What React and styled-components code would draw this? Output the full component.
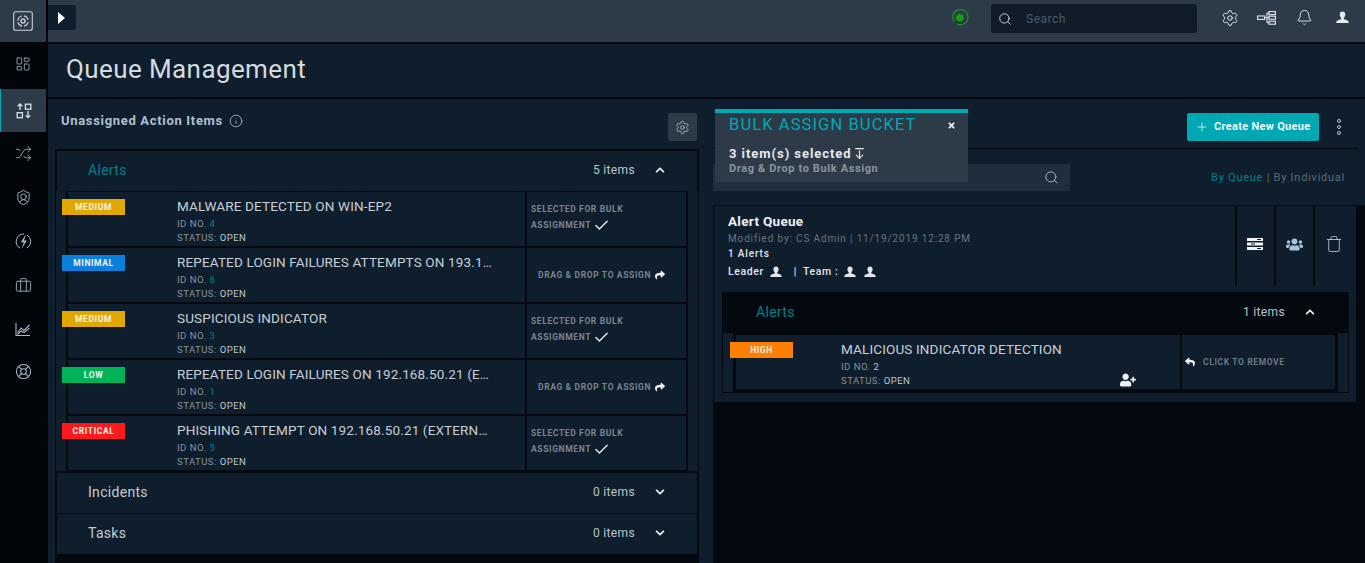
import React from 'react';
import styled, { createGlobalStyle } from 'styled-components';
import {
  LayoutDashboard, Shuffle, ShieldUser, Briefcase, LifeBuoy, Settings, Bell, Search,
  Plus, Check, Info, Trash, ArrowDownFromLine
} from 'lucide-react';
import { FaShare, FaReply, FaUsers, FaUserPlus, FaChevronUp, FaChevronDown, FaTimes } from 'react-icons/fa';

const GlobalStyle = createGlobalStyle`
  html, body { margin: 0; height: 100%; overflow: hidden; background: #03090f; }
  body { font-family: Roboto, "Liberation Sans", sans-serif; }
  * { box-sizing: border-box; }
`;

const Shell = styled.div`
  display: flex;
  width: 1365px;
  height: 563px;
  overflow: hidden;
  background: #03090f;
`;

const Sidebar = styled.nav`
  width: 48px;
  flex: none;
  background: #02060b;
  display: flex;
  flex-direction: column;
`;

const LogoCell = styled.div`
  width: 46px;
  height: 42px;
  background: #2d3a48;
  display: flex;
  align-items: center;
  justify-content: center;
  color: #c9d0d6;
`;

const NavItem = styled.div`
  width: 46px;
  height: ${p => p.$h || 43}px;
  margin-top: ${p => p.$gap}px;
  display: flex;
  align-items: center;
  justify-content: center;
  color: #a5b8c9;
  background: ${p => (p.$active ? '#2d3a48' : 'transparent')};
  border-left: ${p => (p.$active ? '1px solid #00a8b3' : '0')};
`;

const Main = styled.div`
  flex: 1;
  min-width: 0;
  display: flex;
  flex-direction: column;
`;

const TopBar = styled.header`
  height: 42px;
  flex: none;
  background: #2d3a48;
  display: flex;
  align-items: flex-start;
  color: #e6ebef;
`;

const ExpandButton = styled.div`
  width: 28px;
  height: 25px;
  margin-top: 5px;
  background: #0f1e2d;
  border-radius: 0 2px 2px 0;
  display: flex;
  align-items: center;
  padding-left: 10px;
  &::before {
    content: '';
    border-left: 7px solid #fff;
    border-top: 6px solid transparent;
    border-bottom: 6px solid transparent;
  }
`;

const Status = styled.div`
  margin-left: auto;
  margin-top: 8px;
  width: 18px;
  height: 18px;
`;

const TopSearch = styled.div`
  width: 206px;
  height: 29px;
  margin: 4px 23px 0 22px;
  background: #101d28;
  border-radius: 2px;
  display: flex;
  align-items: center;
  padding-left: 7px;
  gap: 14px;
  font-size: 12px;
  letter-spacing: 0.5px;
  color: #4d5b68;
`;

const TopIcons = styled.div`
  display: flex;
  align-items: center;
  height: 35px;
  padding-right: 13px;
`;

const TopIcon = styled.div`
  width: 20px;
  margin-left: ${p => p.$gap || 0}px;
  display: flex;
  justify-content: center;
`;

const PageHeader = styled.div`
  height: 53px;
  flex: none;
  margin: 2px 0;
  background: #0f1e2d;
  padding: 8px 18px;
  font-size: 26px;
  line-height: 34px;
  letter-spacing: 0.4px;
  color: #d5dade;
`;

const Content = styled.div`
  flex: 1;
  min-height: 0;
  display: flex;
`;

const LeftPanel = styled.section`
  width: 665px;
  flex: none;
  background: #0f1e2d;
  display: flex;
  flex-direction: column;
`;

const LeftHead = styled.div`
  height: 50px;
  flex: none;
  padding: 14px 16px 0 13px;
  display: flex;
  align-items: flex-start;
  color: #aec0d1;
  font-size: 13px;
  font-weight: 700;
  letter-spacing: 0.68px;
`;

const LeftTitle = styled.div`
  line-height: 15px;
  display: flex;
  align-items: center;
  gap: 6px;
`;

const GearButton = styled.div`
  width: 29px;
  height: 28px;
  margin-left: auto;
  background: #2d3a48;
  border-radius: 2px;
  display: flex;
  align-items: center;
  justify-content: center;
`;

const Board = styled.div`
  margin: 0 14px 0 7px;
  padding: 2px 1px 0;
  flex: 1;
  background: #03090f;
  display: flex;
  flex-direction: column;
`;

const GroupHead = styled.div`
  height: ${p => p.$h || 40}px;
  flex: none;
  margin: ${p => p.$m || '0 1px 1px'};
  background: ${p => (p.$dark ? '#03090f' : '#0f1e2d')};
  display: flex;
  align-items: center;
  padding-left: ${p => p.$pad || 31}px;
  padding-right: ${p => p.$pr || 32}px;
  padding-bottom: 3px;
  color: ${p => (p.$open ? '#00808c' : '#c4cbd2')};
  font-size: 14px;
  letter-spacing: 0.3px;
`;

const GroupCount = styled.span`
  margin-left: auto;
  margin-right: 20px;
  font-size: 12px;
  letter-spacing: 0.35px;
  color: #bcc4cb;
`;

const Rows = styled.div`
  display: flex;
  gap: 2px;
  align-items: stretch;
  margin-bottom: 2px;
`;

const Rail = styled.div`
  width: 10px;
  flex: none;
  background: #0f1e2d;
`;

const RowStack = styled.div`
  flex: 1;
  min-width: 0;
  display: flex;
  flex-direction: column;
  gap: 2px;
  padding: 1px 0;
`;

const Row = styled.article`
  position: relative;
  height: 54px;
  background: #0f1e2d;
  display: flex;
  padding-left: ${p => p.$pad || 109}px;
`;

const Badge = styled.span`
  position: absolute;
  left: -6px;
  top: 7px;
  width: 63px;
  height: 16px;
  background: ${p => p.$color};
  color: #f5f5f0;
  font-size: 8.5px;
  font-weight: 700;
  letter-spacing: 0.6px;
  display: flex;
  align-items: center;
  justify-content: center;
`;

const RowBody = styled.div`
  flex: 1;
  min-width: 0;
  padding-top: 6px;
  padding-right: 29px;
`;

const RowTitle = styled.div`
  font-size: 13.5px;
  line-height: 17px;
  letter-spacing: 0.15px;
  color: #c8ced4;
  text-transform: uppercase;
  white-space: nowrap;
  overflow: hidden;
  text-overflow: ellipsis;
`;

const RowMeta = styled.div`
  margin-top: ${p => (p.$first ? '2px' : '0')};
  font-size: 9.5px;
  line-height: 14px;
  letter-spacing: 0.5px;
  color: #84929f;
`;

const MetaValue = styled.span`
  color: ${p => (p.$teal ? '#00808c' : '#c0c8d0')};
`;

const RowAction = styled.div`
  width: ${p => p.$w || 161}px;
  flex: none;
  border-left: 2px solid #03090f;
  display: flex;
  flex-direction: column;
  justify-content: center;
  padding-left: ${p => p.$pad || 4}px;
  padding-bottom: ${p => (p.$stacked ? 3 : 0)}px;
  color: ${p => p.$color || '#7a858f'};
  font-size: 8.5px;
  font-weight: 700;
  letter-spacing: 0.62px;
  line-height: 15px;
`;

const ActionLine = styled.div`
  display: flex;
  align-items: center;
  gap: ${p => p.$gap || 2}px;
  white-space: nowrap;
`;

const AddMember = styled.span`
  position: absolute;
  left: 384px;
  bottom: 1px;
  display: flex;
  color: #eef1f3;
`;

const RightPanel = styled.section`
  flex: 1;
  min-width: 0;
  display: flex;
  flex-direction: column;
  position: relative;
`;

const RightTop = styled.div`
  height: 106px;
  flex: none;
  background: #0f1e2d;
`;

const ToolRow = styled.div`
  height: 50px;
  margin-right: 7px;
  border-bottom: 1px solid #03090f;
  display: flex;
  align-items: flex-start;
  justify-content: flex-end;
  padding-top: 14px;
`;

const CreateButton = styled.div`
  width: 132px;
  height: 28px;
  background: #00a8b3;
  border-radius: 2px;
  color: #eefafa;
  font-size: 11px;
  font-weight: 700;
  letter-spacing: 0.3px;
  display: flex;
  align-items: center;
  gap: 5px;
  padding: 0 0 1px 8px;
`;

const MoreDots = styled.div`
  width: 39px;
  height: 28px;
  display: flex;
  flex-direction: column;
  align-items: center;
  justify-content: center;
  gap: 2px;
  & > i {
    width: 4px;
    height: 4px;
    border-radius: 50%;
    border: 1px solid #b4c2cf;
  }
`;

const FilterRow = styled.div`
  display: flex;
  align-items: flex-start;
  justify-content: space-between;
  padding: 15px 20px 0 0;
`;

const QueueSearch = styled.div`
  width: 357px;
  height: 27px;
  background: #1f2e3d;
  display: flex;
  align-items: center;
  justify-content: flex-end;
  padding-right: 11px;
  color: #b8c4cf;
`;

const ViewToggle = styled.div`
  margin-top: 7px;
  font-size: 11px;
  letter-spacing: 0.75px;
  color: #5d6975;
`;

const ToggleOn = styled.span`
  color: #00808c;
`;

const QueueCard = styled.article`
  width: 642px;
  height: 197px;
  margin-left: 1px;
  background: #0f1e2d;
  border-top: 1px solid #03090f;
  flex: none;
`;

const CardTop = styled.div`
  height: 80px;
  display: flex;
`;

const CardInfo = styled.div`
  flex: 1;
  padding: 5px 0 0 14px;
`;

const CardName = styled.div`
  font-size: 13.5px;
  font-weight: 700;
  line-height: 20px;
  letter-spacing: 0.3px;
  color: #eef1f3;
`;

const CardLine = styled.div`
  font-size: 10px;
  line-height: 15px;
  letter-spacing: 0.85px;
  color: ${p => p.$color || '#e2e6ea'};
  font-weight: ${p => (p.$bold ? 500 : 400)};
`;

const CardPeople = styled.div`
  height: 21px;
  display: flex;
  align-items: center;
  gap: 6px;
  font-size: 10.5px;
  font-weight: 500;
  letter-spacing: 0.6px;
  color: #e2e6ea;
`;

const PeopleRule = styled.span`
  margin-left: 6px;
`;

const PeopleIcon = styled.span`
  display: flex;
  margin-left: ${p => p.$gap || 0}px;
`;

const CardTool = styled.div`
  width: 39px;
  border-left: 2px solid #03090f;
  display: flex;
  align-items: center;
  justify-content: center;
  padding: 0 1px 4px 0;
  color: ${p => p.$color || '#e8ecef'};
  &:last-child { width: 43px; padding-right: 3px; }
`;

const Inner = styled.div`
  margin: 6px 7px 0 8px;
  height: 101px;
  background: #03090f;
`;

const InnerRows = styled(Rows)`
  height: 59px;
  margin: -1px 1px 0;
  gap: 3px;
`;

const InnerStack = styled(RowStack)`
  padding-top: 2px;
`;

const Bucket = styled.aside`
  position: absolute;
  left: 2px;
  top: 10px;
  width: 253px;
  height: 73px;
  background: #2d3a48;
  border-top: 4px solid #00a8b3;
  padding: 2px 12px 0 14px;
`;

const BucketHead = styled.div`
  display: flex;
  justify-content: space-between;
  align-items: center;
  font-size: 16.5px;
  line-height: 20px;
  letter-spacing: 1.1px;
  color: #00a8b3;
`;

const BucketCount = styled.div`
  margin-top: 11px;
  display: flex;
  align-items: center;
  gap: 1px;
  font-size: 13px;
  font-weight: 700;
  line-height: 15px;
  letter-spacing: 0.95px;
  color: #e6e9ec;
`;

const BucketHint = styled.div`
  margin-top: 1px;
  font-size: 11px;
  font-weight: 700;
  line-height: 14px;
  letter-spacing: 0.62px;
  color: #8a949e;
`;

const UserGlyph = ({ size = 12 }) => (
  <svg width={size} height={size} viewBox="0 0 12 12" fill="currentColor">
    <path d="M6 .5c1.6 0 2.6 1.2 2.6 2.8 0 1.2-.6 2.4-1.3 3v1c.5.5 3.2 1 4 1.9.3.3.4 1 .4 1.8H.3c0-.8.1-1.5.4-1.8.8-.9 3.5-1.4 4-1.9v-1c-.7-.6-1.3-1.8-1.3-3C3.4 1.7 4.4.5 6 .5z" />
  </svg>
);

const LogoMark = () => (
  <svg width="20" height="20" viewBox="0 0 20 20" fill="none" stroke="currentColor">
    <rect x="0.7" y="0.7" width="18.6" height="18.6" rx="2" strokeWidth="1.1" />
    <path d="M4.8 10a5.2 5.2 0 0 1 4-5M11 4.9a5.2 5.2 0 0 1 4.1 4M15.1 11a5.2 5.2 0 0 1-4 4.1M9 15.1a5.2 5.2 0 0 1-4.1-4" strokeWidth="1.1" />
    <circle cx="10" cy="10" r="2" strokeWidth="1.4" />
  </svg>
);

const TransferGlyph = () => (
  <svg width="16" height="16" viewBox="0 0 16 16" fill="none" stroke="#dbe3ea" strokeWidth="1.3">
    <path d="M4 7V1M1.7 3.2 4 1l2.3 2.2" />
    <rect x="1.2" y="9.7" width="5.2" height="5" />
    <rect x="9.4" y="1.2" width="5.4" height="5" />
    <path d="M12 8v6.5M9.8 12.4l2.2 2.2 2.2-2.2" />
  </svg>
);

const BoltGlyph = () => (
  <svg width="17" height="17" viewBox="0 0 17 17" fill="none" stroke="#a5b8c9">
    <path d="M5 15A7.5 7.5 0 0 1 9 1M12 2a7.5 7.5 0 0 1 0 13" strokeWidth="1" />
    <path d="M11 1 5.8 9.3h3L6.5 16l5.4-8.6H9z" fill="#a5b8c9" stroke="none" />
  </svg>
);

const ChartGlyph = () => (
  <svg width="16" height="16" viewBox="0 0 16 16" fill="none" stroke="#a5b8c9" strokeWidth="1.1">
    <path d="M1 2v12.5h14" />
    <path d="M2.5 11.5 6 7l3 2.5L14.5 4M2.5 13.5 6 10l3 1.6 5.5-4.6" />
  </svg>
);

const FlowGlyph = () => (
  <svg width="19" height="14" viewBox="0 0 19 14" fill="none" stroke="#e6ebef" strokeWidth="1.1">
    <rect x="0.6" y="5" width="7" height="3.4" />
    <rect x="12" y="0.6" width="6.4" height="3" />
    <rect x="12" y="5.2" width="6.4" height="3" />
    <rect x="12" y="10.2" width="6.4" height="3" />
    <path d="M7.6 6.7H12M10 2.1v9.6M10 2.1h2M10 11.7h2" />
  </svg>
);

const StatusGlyph = () => (
  <svg width="18" height="18" viewBox="0 0 18 18" fill="none">
    <path d="M3.2 13.6A7.6 7.6 0 1 1 6 16" stroke="#15a012" strokeWidth="1.1" />
    <path d="M4.6 10C5 7.4 7.4 5.6 9.6 5.8l.8 1.5 2.3-1.4-.6 2.6 1 1.3c-.4 2.2-2.2 3.7-4.2 3.7-2 0-3.6-1.5-4.3-3.5z" fill="#15a012" />
  </svg>
);

const StackGlyph = () => (
  <svg width="16" height="12" viewBox="0 0 16 12" fill="#f0f3f5">
    <path d="M0 0h16v3H0zM0 4.5h16v3H0zM0 9h16v3H0z" />
    <path d="M10 1h4v1h-4zM4 5.5h4v1H4zM10 10h4v1h-4z" fill="#0f1e2d" />
  </svg>
);

const items = [
  { sev: 'Medium', color: '#e0a800', title: 'Malware detected on WIN-EP2', id: 4, picked: true },
  { sev: 'Minimal', color: '#0a7fdc', title: 'Repeated Login Failures Attempts on 193.168.50.21 (External)', id: 6 },
  { sev: 'Medium', color: '#e0a800', title: 'Suspicious Indicator', id: 3, picked: true },
  { sev: 'Low', color: '#00b359', title: 'Repeated Login Failures on 192.168.50.21 (External)', id: 1 },
  { sev: 'Critical', color: '#ff1a1a', title: 'Phishing Attempt on 192.168.50.21 (External Source)', id: 5, picked: true }
];

const PickedAction = () => (
  <RowAction $stacked>
    <ActionLine>SELECTED FOR BULK</ActionLine>
    <ActionLine>ASSIGNMENT <Check size={17} color="#eef1f3" strokeWidth={1.8} /></ActionLine>
  </RowAction>
);

const DragAction = () => (
  <RowAction $pad={11}>
    <ActionLine $gap={4}>DRAG &amp; DROP TO ASSIGN <FaShare size={10} color="#eef1f3" /></ActionLine>
  </RowAction>
);

const navIcons = [
  <LayoutDashboard size={16} strokeWidth={1.2} />,
  <TransferGlyph />,
  <Shuffle size={17} strokeWidth={1.2} />,
  <ShieldUser size={17} strokeWidth={1.3} />,
  <BoltGlyph />,
  <Briefcase size={17} strokeWidth={1.2} />,
  <ChartGlyph />,
  <LifeBuoy size={17} strokeWidth={1.5} />
];

const navGaps = [0, 4, 0, 1, 1, 1, 0, 0];

export default function App() {
  return (
    <Shell>
      <GlobalStyle />
      <Sidebar>
        <LogoCell><LogoMark /></LogoCell>
        {navIcons.map((icon, i) => (
          <NavItem key={i} $gap={navGaps[i]} $active={i === 1}>{icon}</NavItem>
        ))}
      </Sidebar>
      <Main>
        <TopBar>
          <ExpandButton />
          <Status><StatusGlyph /></Status>
          <TopSearch><Search size={14} color="#dfe5ea" strokeWidth={1.5} />Search</TopSearch>
          <TopIcons>
            <TopIcon><Settings size={18} strokeWidth={1.3} /></TopIcon>
            <TopIcon $gap={16}><FlowGlyph /></TopIcon>
            <TopIcon $gap={18}><Bell size={17} strokeWidth={1.3} /></TopIcon>
            <TopIcon $gap={18}><UserGlyph size={13} /></TopIcon>
          </TopIcons>
        </TopBar>
        <PageHeader>Queue Management</PageHeader>
        <Content>
          <LeftPanel>
            <LeftHead>
              <LeftTitle>Unassigned Action Items <Info size={14} strokeWidth={1.4} /></LeftTitle>
              <GearButton><Settings size={15} strokeWidth={1.3} color="#b4c2cf" /></GearButton>
            </LeftHead>
            <Board>
              <GroupHead $open $m="0 1px">
                Alerts
                <GroupCount>5 items</GroupCount>
                <FaChevronUp size={10} color="#f0f3f5" />
              </GroupHead>
              <Rows>
                <Rail />
                <RowStack>
                  {items.map(item => (
                    <Row key={item.id}>
                      <Badge $color={item.color}>{item.sev.toUpperCase()}</Badge>
                      <RowBody>
                        <RowTitle>{item.title}</RowTitle>
                        <RowMeta $first>ID NO. <MetaValue $teal>{item.id}</MetaValue></RowMeta>
                        <RowMeta>STATUS: <MetaValue>OPEN</MetaValue></RowMeta>
                      </RowBody>
                      {item.picked ? <PickedAction /> : <DragAction />}
                    </Row>
                  ))}
                </RowStack>
                <Rail />
              </Rows>
              <GroupHead>
                Incidents
                <GroupCount>0 items</GroupCount>
                <FaChevronDown size={10} color="#f0f3f5" />
              </GroupHead>
              <GroupHead>
                Tasks
                <GroupCount>0 items</GroupCount>
                <FaChevronDown size={10} color="#f0f3f5" />
              </GroupHead>
            </Board>
          </LeftPanel>
          <RightPanel>
            <RightTop>
              <ToolRow>
                <CreateButton><Plus size={14} strokeWidth={1.3} />Create New Queue</CreateButton>
                <MoreDots><i /><i /><i /></MoreDots>
              </ToolRow>
              <FilterRow>
                <QueueSearch><Search size={15} strokeWidth={1.4} /></QueueSearch>
                <ViewToggle><ToggleOn>By Queue</ToggleOn> | By Individual</ViewToggle>
              </FilterRow>
            </RightTop>
            <QueueCard>
              <CardTop>
                <CardInfo>
                  <CardName>Alert Queue</CardName>
                  <CardLine $color="#67727d">Modified by: CS Admin | 11/19/2019 12:28 PM</CardLine>
                  <CardLine $bold>1 Alerts</CardLine>
                  <CardPeople>
                    Leader
                    <PeopleIcon><UserGlyph /></PeopleIcon>
                    <PeopleRule>|</PeopleRule>
                    Team :
                    <PeopleIcon><UserGlyph /></PeopleIcon>
                    <PeopleIcon $gap={2}><UserGlyph /></PeopleIcon>
                  </CardPeople>
                </CardInfo>
                <CardTool><StackGlyph /></CardTool>
                <CardTool $color="#a9c3da"><FaUsers size={17} /></CardTool>
                <CardTool $color="#c3d2df"><Trash size={18} strokeWidth={1.1} /></CardTool>
              </CardTop>
              <Inner>
                <GroupHead $open $dark $h={42} $pad={34} $pr={34} $m="0">
                  Alerts
                  <GroupCount>1 items</GroupCount>
                  <FaChevronUp size={10} color="#f0f3f5" />
                </GroupHead>
                <InnerRows>
                  <Rail />
                  <InnerStack>
                    <Row $pad={105}>
                      <Badge $color="#ff8000">HIGH</Badge>
                      <RowBody>
                        <RowTitle>Malicious Indicator Detection</RowTitle>
                        <RowMeta $first>ID NO. <MetaValue>2</MetaValue></RowMeta>
                        <RowMeta>STATUS: <MetaValue>OPEN</MetaValue></RowMeta>
                      </RowBody>
                      <AddMember><FaUserPlus size={16} /></AddMember>
                      <RowAction $w={155} $pad={3} $color="#6d7882">
                        <ActionLine $gap={8}><FaReply size={10} color="#eef1f3" />CLICK TO REMOVE</ActionLine>
                      </RowAction>
                    </Row>
                  </InnerStack>
                  <Rail />
                </InnerRows>
              </Inner>
            </QueueCard>
            <Bucket>
              <BucketHead>
                BULK ASSIGN BUCKET
                <FaTimes size={9} color="#f0f3f5" />
              </BucketHead>
              <BucketCount>3 item(s) selected <ArrowDownFromLine size={13} strokeWidth={2.2} /></BucketCount>
              <BucketHint>Drag &amp; Drop to Bulk Assign</BucketHint>
            </Bucket>
          </RightPanel>
        </Content>
      </Main>
    </Shell>
  );
}
